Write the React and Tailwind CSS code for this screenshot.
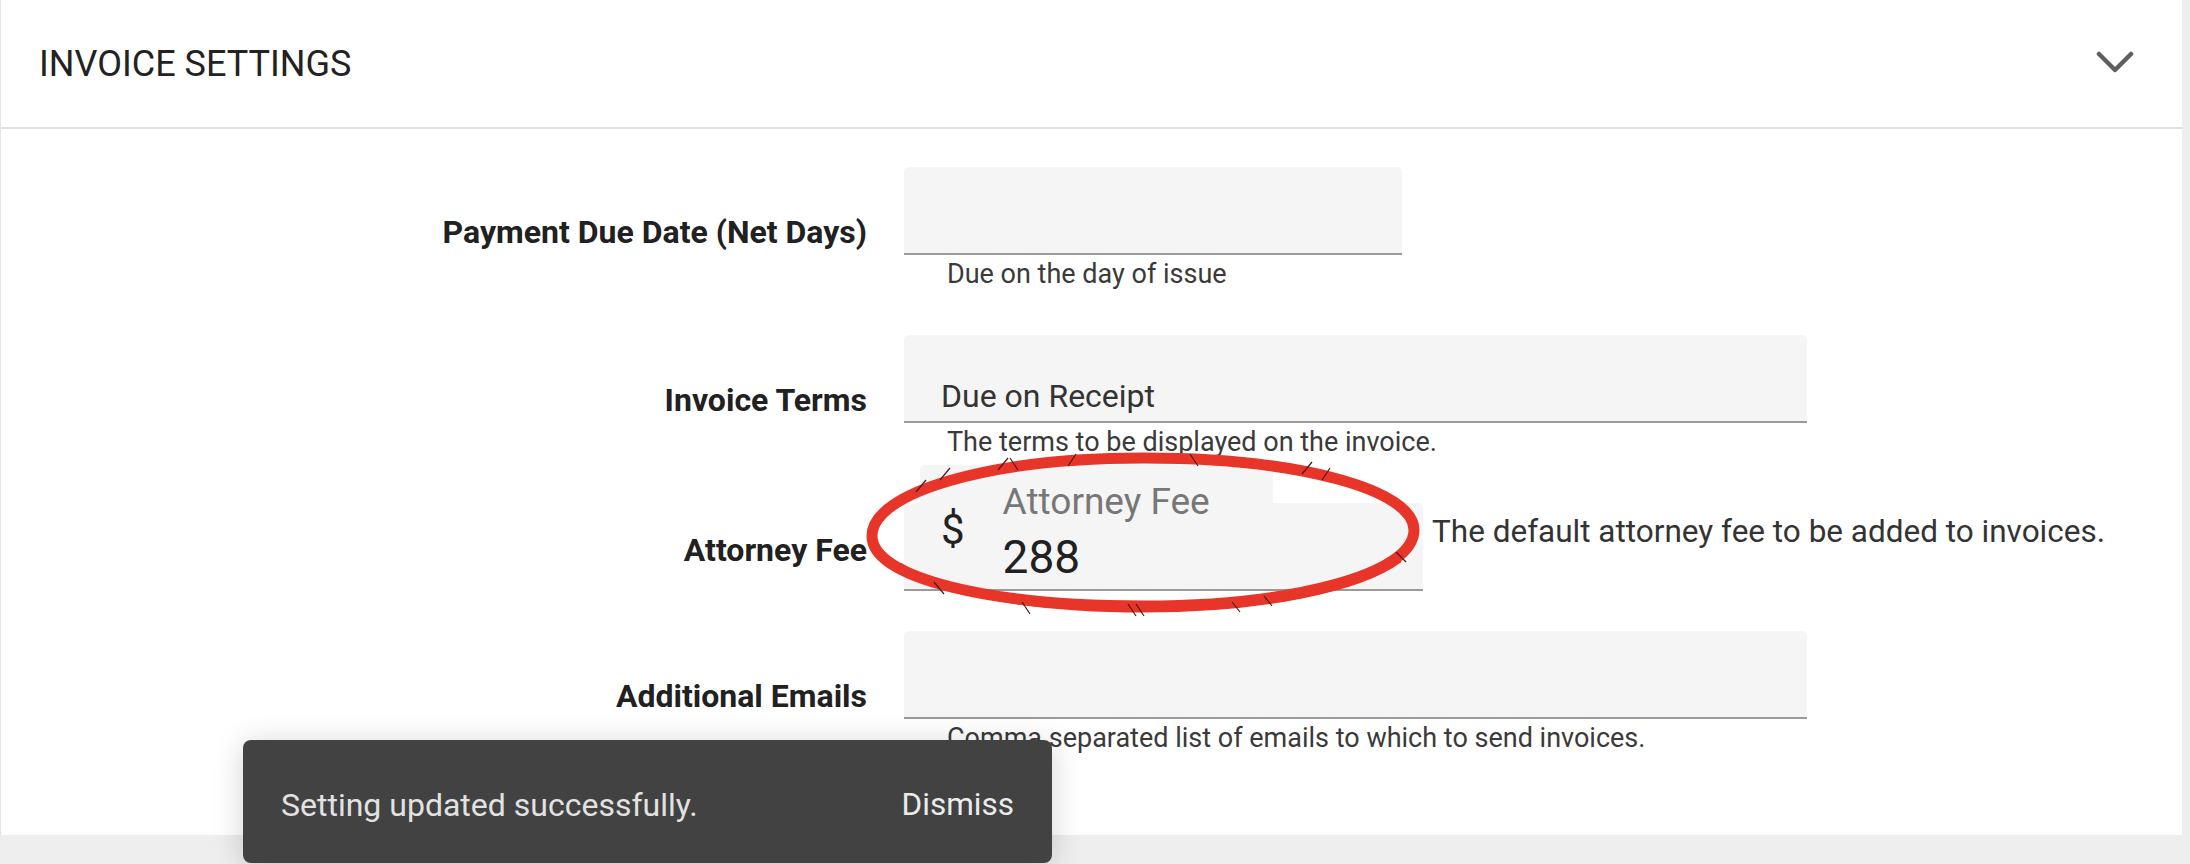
import React from "react";

const font = { fontFamily: "Roboto, 'Noto Sans', sans-serif" };

function Label({ children }) {
  return (
    <div className="w-[866px] shrink-0 text-right text-[32px] font-bold leading-[40px] text-[#212121] pt-[6px]">
      {children}
    </div>
  );
}

function Helper({ children }) {
  return (
    <div className="pl-[43px] pt-[2px] text-[27px] leading-[34px] text-[#3a3a3a] whitespace-nowrap">{children}</div>
  );
}

export default function App() {
  return (
    <div
      className="relative w-[2190px] h-[864px] overflow-hidden bg-[#eeeeee]"
      style={font}
    >
      <div className="w-[2182px] h-[835px] bg-white border-l border-[#e3e3e3] flex flex-col">
        {/* Header */}
        <div className="h-[129px] shrink-0 border-b-2 border-[#e2e2e2] flex items-center justify-between pl-[38px] pr-[48px]">
          <div className="text-[36px] leading-[40px] text-[#222222]">
            INVOICE SETTINGS
          </div>
          <svg width="38" height="24" viewBox="0 0 38 24" className="-mt-[2px]">
            <polyline
              points="3,3 19,19 35,3"
              fill="none"
              stroke="#5f5f5f"
              strokeWidth="4.5"
              strokeLinecap="round"
              strokeLinejoin="round"
            />
          </svg>
        </div>

        {/* Form */}
        <div className="flex flex-col pt-[38px]">
          {/* Row 1 */}
          <div className="flex items-center">
            <Label>Payment Due Date (Net Days)</Label>
            <div className="ml-[37px] w-[498px] flex flex-col">
              <div className="h-[88px] bg-[#f5f5f5] rounded-t-[5px] border-b-2 border-[#9a9a9a]" />
              <Helper>Due on the day of issue</Helper>
            </div>
          </div>

          {/* Row 2 */}
          <div className="flex items-center mt-[44px]">
            <Label>Invoice Terms</Label>
            <div className="ml-[37px] w-[903px] flex flex-col">
              <div className="h-[88px] bg-[#f5f5f5] rounded-t-[5px] border-b-2 border-[#9a9a9a] flex items-end pl-[37px] pb-[6px]">
                <span className="text-[32px] leading-[37px] text-[#333333]">Due on Receipt</span>
              </div>
              <Helper>The terms to be displayed on the invoice.</Helper>
            </div>
          </div>

          {/* Row 3 */}
          <div className="flex items-center mt-[44px]">
            <Label>Attorney Fee</Label>
            <div className="ml-[37px] flex items-start">
              <div className="relative w-[519px] h-[88px] bg-[#f5f5f5] rounded-t-[5px] border-b-2 border-[#9a9a9a] flex pl-[37px]">
                <div className="absolute left-[16px] -top-[38px] w-[353px] h-[38px] bg-[#f5f5f5] rounded-t-[5px]" />
                <span className="relative self-start mt-[6px] text-[42px] leading-[42px] text-[#222222]">$</span>
                <div className="relative ml-[38px] h-full flex flex-col justify-end pb-[5px]">
                  <span className="text-[37px] leading-[36px] mb-[10px] text-[#777777] whitespace-nowrap">Attorney Fee</span>
                  <span className="text-[46px] leading-[54px] text-[#212121]">288</span>
                </div>
              </div>
              <div className="ml-[9px] mt-[11px] text-[31.5px] leading-[36px] text-[#333333] whitespace-nowrap">
                The default attorney fee to be added to invoices.
              </div>
            </div>
          </div>

          {/* Row 4 */}
          <div className="flex items-center mt-[40px]">
            <Label>Additional Emails</Label>
            <div className="ml-[37px] w-[903px] flex flex-col">
              <div className="h-[88px] bg-[#f5f5f5] rounded-t-[5px] border-b-2 border-[#9a9a9a]" />
              <Helper>Comma separated list of emails to which to send invoices.</Helper>
            </div>
          </div>
        </div>
      </div>

      {/* Red annotation ellipse */}
      <svg
        className="absolute left-[860px] top-[440px] pointer-events-none"
        width="570"
        height="185"
        viewBox="0 0 570 185"
      >
        <path
          d="M284 18 C 440 18 554 50 554 90 C 554 135 430 166 284 166 C 130 166 12 138 12 96 C 12 52 130 18 284 18 Z"
          fill="none"
          stroke="#e8352a"
          strokeWidth="11"
        />
        <path
          d="M40 125 C 90 160 200 170 284 170 C 400 170 500 150 540 120"
          fill="none"
          stroke="#e8352a"
          strokeWidth="5"
        />
        <g stroke="#4a1a14" strokeWidth="1.2" fill="none">
          <path d="M56 52 L66 40" />
          <path d="M80 40 L90 28" />
          <path d="M138 30 L148 18 M150 18 L158 30" />
          <path d="M208 26 L216 14" />
          <path d="M330 14 L338 26" />
          <path d="M442 34 L452 22 M462 40 L470 28" />
          <path d="M74 142 L84 154" />
          <path d="M162 162 L170 174" />
          <path d="M268 164 L276 176 M276 164 L284 176" />
          <path d="M372 162 L380 172 M404 156 L412 166" />
          <path d="M536 112 L546 122" />
        </g>
      </svg>

      {/* Snackbar */}
      <div className="absolute left-[243px] top-[740px] w-[809px] h-[123px] rounded-[8px] bg-[#424242] shadow-[0_4px_30px_rgba(0,0,0,0.18)] flex items-center justify-between pl-[38px] pr-[38px] pt-[6px]">
        <span className="text-[32px] leading-[40px] text-[#e2e2e2]">Setting updated successfully.</span>
        <span className="text-[31.5px] leading-[40px] text-[#ececec]">Dismiss</span>
      </div>
    </div>
  );
}
